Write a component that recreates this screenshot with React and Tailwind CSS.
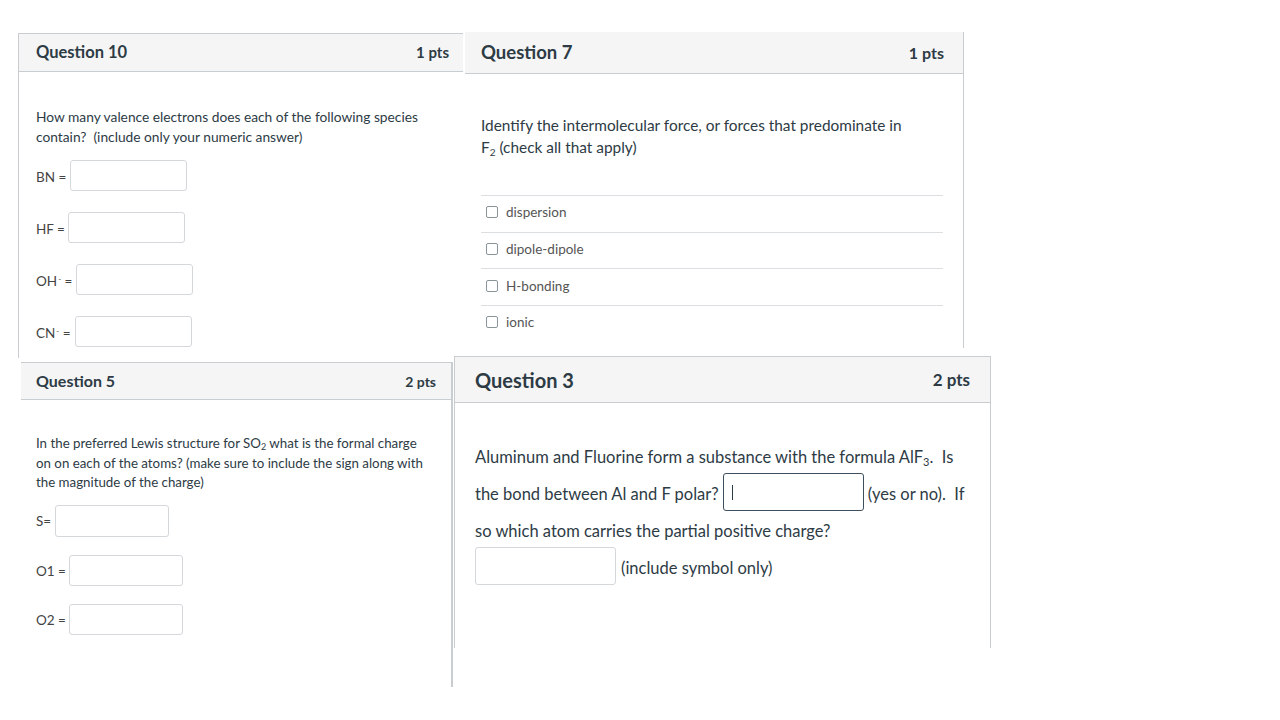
import React from 'react';

const Field = ({ label, width = 'w-[117px]', gap = 'ml-[3px]', sup }) => (
  <div className="flex items-center h-[31px]">
    <span className="text-[13.5px] text-[#444] pt-[3px]">
      {label}
      {sup && <sup className="text-[8px] leading-none ml-[1px]">-</sup>}
      {' '}=
    </span>
    <div className={`${gap} ${width} h-[31px] border border-[#d4d8db] rounded-[3px] bg-white`} />
  </div>
);

const Option = ({ label }) => (
  <div className="flex items-center h-[36.7px] border-t border-[#dcdfe2] pl-[5px] pb-[3px]">
    <span className="w-[12px] h-[12px] border border-[#8a949b] rounded-[2px] bg-white" />
    <span className="ml-[8px] text-[13.5px] text-[#555]">{label}</span>
  </div>
);

const Question10 = () => (
  <div className="ml-[18px] mt-[33px] w-[445px] h-[325px] border-l border-[#c7cdd1]">
    <div className="h-[39px] bg-[#f5f5f5] border-y border-[#c7cdd1] flex items-center justify-between pl-[17px] pr-[14px]">
      <span className="text-[16.5px] font-bold text-[#2d3b45]">Question 10</span>
      <span className="text-[15px] font-bold text-[#2d3b45]">1 pts</span>
    </div>
    <div className="pl-[17px] pt-[35px]">
      <p className="text-[13.75px] leading-[20px] text-[#2d3b45] w-[400px]">
        How many valence electrons does each of the following species contain?&nbsp; (include only your numeric answer)
      </p>
      <div className="mt-[13px] flex flex-col gap-[21px]">
        <Field label="BN" gap="ml-[4px]" />
        <Field label="HF" gap="ml-[3px]" />
        <Field label="OH" sup gap="ml-[4px]" />
        <Field label="CN" sup gap="ml-[4px]" />
      </div>
    </div>
  </div>
);

const Question7 = () => (
  <div className="ml-[2px] mt-[32px] w-[499px] h-[316px] border-r border-[#c7cdd1]">
    <div className="h-[42px] bg-[#f5f5f5] border-b border-[#c7cdd1] flex items-center justify-between pl-[16px] pr-[19px]">
      <span className="text-[18.5px] font-bold text-[#2d3b45]">Question 7</span>
      <span className="text-[16px] font-bold text-[#2d3b45]">1 pts</span>
    </div>
    <div className="pl-[16px] pr-[20px] pt-[40px]">
      <p className="text-[15.4px] leading-[22px] text-[#2d3b45]">
        Identify the intermolecular force, or forces that predominate in
        <br />
        F<sub className="text-[10px] leading-none">2</sub> (check all that apply)
      </p>
      <div className="mt-[37px]">
        <Option label="dispersion" />
        <Option label="dipole-dipole" />
        <Option label="H-bonding" />
        <Option label="ionic" />
      </div>
    </div>
  </div>
);

const Question5 = () => (
  <div className="ml-[21px] mt-[6px] w-[432px] h-[325px] border-r-2 border-[#c7cdd1]">
    <div className="h-[38px] bg-[#f5f5f5] border-y border-[#c7cdd1] flex items-center justify-between pl-[15px] pr-[15px]">
      <span className="text-[16px] font-bold text-[#2d3b45]">Question 5</span>
      <span className="text-[14px] font-bold text-[#2d3b45]">2 pts</span>
    </div>
    <div className="pl-[15px] pt-[34px]">
      <p className="text-[13.3px] leading-[19.5px] text-[#2d3b45] w-[395px]">
        In the preferred Lewis structure for SO<sub className="text-[9px] leading-none">2</sub> what is the formal charge on on each of the atoms? (make sure to include the sign along with the magnitude of the charge)
      </p>
      <div className="mt-[12px] flex flex-col gap-[18px]">
        <div className="flex items-center h-[32px]">
          <span className="text-[13.5px] text-[#444] pt-[2px]">S=</span>
          <div className="ml-[4px] w-[114px] h-[32px] border border-[#d4d8db] rounded-[3px]" />
        </div>
        <div className="flex items-center h-[31px]">
          <span className="text-[13.5px] text-[#444] pt-[2px]">O1 =</span>
          <div className="ml-[3px] w-[114px] h-[31px] border border-[#d4d8db] rounded-[3px]" />
        </div>
        <div className="flex items-center h-[31px]">
          <span className="text-[13.5px] text-[#444] pt-[2px]">O2 =</span>
          <div className="ml-[3px] w-[114px] h-[31px] border border-[#d4d8db] rounded-[3px]" />
        </div>
      </div>
    </div>
  </div>
);

const Question3 = () => (
  <div className="ml-[1px] w-[537px] h-[292px] border-x border-[#c7cdd1]">
    <div className="h-[47px] bg-[#f5f5f5] border-y border-[#c7cdd1] flex items-center justify-between pl-[20px] pr-[20px]">
      <span className="text-[20px] font-bold text-[#2d3b45]">Question 3</span>
      <span className="text-[17px] font-bold text-[#2d3b45]">2 pts</span>
    </div>
    <div className="pl-[20px] pt-[36px] text-[16.5px] text-[#2d3b45]">
      <div className="h-[37px] flex items-center">
        <span className="whitespace-pre">
          Aluminum and Fluorine form a substance with the formula AlF<sub className="text-[11px] leading-none">3</sub>.  Is
        </span>
      </div>
      <div className="h-[37px] flex items-center whitespace-pre">
        <span>the bond between Al and F polar?</span>
        <div className="ml-[4px] -mt-[5px] w-[141px] h-[38px] border border-[#3d4e5e] rounded-[3px] flex items-center pl-[8px]">
          <span className="w-px h-[15px] bg-[#2d3b45]" />
        </div>
        <span className="ml-[4px]">(yes or no).  If</span>
      </div>
      <div className="h-[37px] flex items-center">so which atom carries the partial positive charge?</div>
      <div className="h-[37px] flex items-center">
        <div className="-mt-[5px] w-[141px] h-[38px] border border-[#d4d8db] rounded-[3px]" />
        <span className="ml-[5px]">(include symbol only)</span>
      </div>
    </div>
  </div>
);

export default function App() {
  return (
    <div className="w-[1280px] h-[720px] bg-white overflow-hidden font-[Lato,sans-serif]">
      <div className="flex items-start h-[323px]">
        <Question10 />
        <Question7 />
      </div>
      <div className="flex items-start mt-[33px]">
        <Question5 />
        <Question3 />
      </div>
    </div>
  );
}
